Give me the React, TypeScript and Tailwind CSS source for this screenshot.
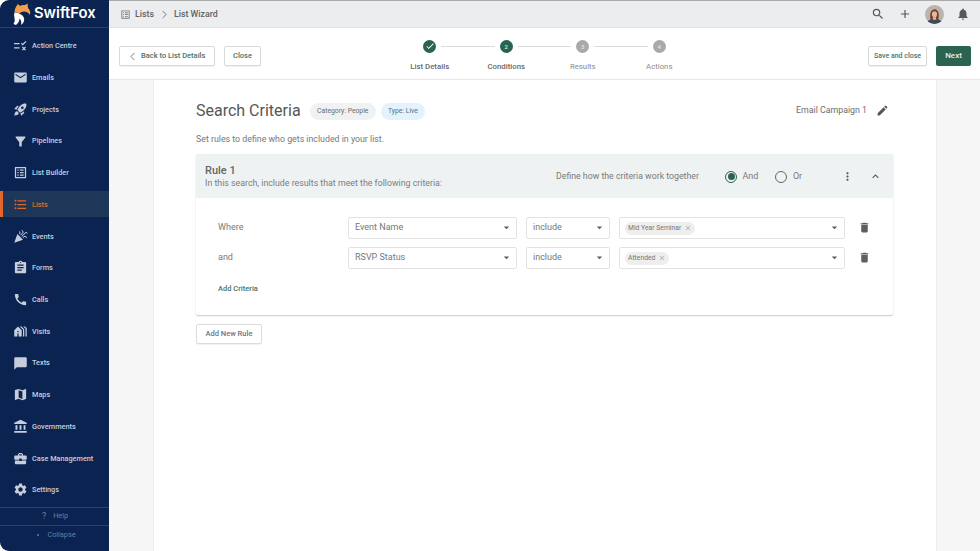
import type { ReactNode } from "react";
import { ChevronLeft, ChevronRight } from "lucide-react";
import {
  MdAccountBalance,
  MdAdd,
  MdArrowDropDown,
  MdAssignment,
  MdBusinessCenter,
  MdCall,
  MdCelebration,
  MdCheck,
  MdClose,
  MdDelete,
  MdEdit,
  MdEmail,
  MdExpandLess,
  MdFilterAlt,
  MdFormatListBulleted,
  MdHolidayVillage,
  MdListAlt,
  MdMap,
  MdMoreVert,
  MdNotifications,
  MdRocketLaunch,
  MdSearch,
  MdSettings,
  MdChatBubble,
} from "react-icons/md";

function ActionIcon() {
  return (
    <svg viewBox="0 0 16 12" className="h-[11px] w-[15px]" fill="none" stroke="currentColor" strokeWidth="1.4">
      <path d="M1 4h6M1 8.5h6" />
      <path d="M9 3.5l1.5 1.5L14 1.5" />
      <path d="M10 7.5l3.5 3.5M13.500 7.500L10 11" />
    </svg>
  );
}

function FoxLogo() {
  return (
    <svg viewBox="0 0 18 22" className="h-[22px] w-[18px]">
      <path d="M5 1L7 3Q9 1.500 12 2L14.500 .5L15 5Q18 8 17 12Q15 8.500 11 8.500Q8 8.500 6.500 10.500Q3.500 9 1.500 9.500Q1.500 5 5 1z" fill="#f0a04b" />
      <path d="M1.500 9.500Q5 9.500 8 11.500Q12 14 11 18Q10.500 20.500 8 22Q9 18 6.500 15.500Q6.500 19 3 22L.5 21Q2.500 18 1.500 15Q.5 12 1.500 9.500z" fill="#ffffff" />
    </svg>
  );
}

function Avatar() {
  return (
    <svg viewBox="0 0 20 20" className="h-[19px] w-[19px] rounded-full">
      <rect width="20" height="20" fill="#b9b4ae" />
      <path d="M2 20c.5-4 3.500-5.500 8-5.500s7.500 1.500 8 5.500z" fill="#3f4a55" />
      <path d="M5.800 15c-.8-4-.6-10 4.200-10.500 4.800.3 5 6.500 4 10.500-2.500 1-5.700 1-8.200 0z" fill="#7c3b2a" />
      <ellipse cx="10" cy="9.800" rx="2.700" ry="3.300" fill="#e2b8a0" />
      <path d="M8.300 13h3.400v2.500H8.300z" fill="#e2b8a0" />
    </svg>
  );
}

const navItems: { label: string; icon: ReactNode; active?: boolean }[] = [
  { label: "Action Centre", icon: <ActionIcon /> },
  { label: "Emails", icon: <MdEmail size={15} /> },
  { label: "Projects", icon: <MdRocketLaunch size={15} /> },
  { label: "Pipelines", icon: <MdFilterAlt size={15} /> },
  { label: "List Builder", icon: <MdListAlt size={15} /> },
  { label: "Lists", icon: <MdFormatListBulleted size={15} />, active: true },
  { label: "Events", icon: <MdCelebration size={15} /> },
  { label: "Forms", icon: <MdAssignment size={15} /> },
  { label: "Calls", icon: <MdCall size={15} /> },
  { label: "Visits", icon: <MdHolidayVillage size={15} /> },
  { label: "Texts", icon: <MdChatBubble size={15} /> },
  { label: "Maps", icon: <MdMap size={15} /> },
  { label: "Governments", icon: <MdAccountBalance size={15} /> },
  { label: "Case Management", icon: <MdBusinessCenter size={15} /> },
  { label: "Settings", icon: <MdSettings size={15} /> },
];

function Sidebar() {
  return (
    <aside className="flex h-full w-[109px] shrink-0 flex-col rounded-l-[9px] bg-[#0b2350] text-[#c6cedd]">
      <div className="flex h-[28px] items-center gap-[3px] border-b border-[#2d4268] pl-[13px]">
        <FoxLogo />
        <span className="font-['Inter',sans-serif] text-[14.800px] font-semibold leading-none text-white">SwiftFox</span>
      </div>
      <nav className="flex flex-col pt-[2px]">
        {navItems.map((item) => (
          <div key={item.label} className="flex h-[31.72px] items-center">
            <div
              className={
                item.active
                  ? "flex h-[26px] w-full items-center gap-[7px] border-l-[3px] border-[#e2672c] bg-[#1e3657] pl-[12px] text-[#e2672c]"
                  : "flex h-[26px] w-full items-center gap-[7px] pl-[15px]"
              }
            >
              <span className="flex w-[10px] justify-center">
                <span className="shrink-0">{item.icon}</span>
              </span>
              <span className="whitespace-nowrap text-[7.300px] font-medium leading-none">{item.label}</span>
            </div>
          </div>
        ))}
      </nav>
      <div className="mt-[1.500px] flex h-[19px] items-center justify-center gap-[7px] border-y border-[#2d4268] pl-[1px] text-[7.300px] text-[#6d7c9b]">
        <span className="text-[9px]">?</span>
        <span>Help</span>
      </div>
      <div className="flex h-[18px] items-center justify-center gap-[8px] pl-[4px] text-[7.300px] text-[#6d7c9b]">
        <span className="h-[2px] w-[2px] rounded-full bg-[#6d7c9b]" />
        <span>Collapse</span>
      </div>
    </aside>
  );
}

function TopBar() {
  return (
    <header className="flex h-[28px] items-center border-y border-t-[#aaaaaa] border-b-[#e0e1e2] bg-[#ecedee] pl-[11px] pr-[10px] text-[#5f6368]">
      <MdListAlt size={11} className="text-[#77797c]" />
      <span className="ml-[4px] pt-px text-[8.800px] font-medium">Lists</span>
      <ChevronRight size={13} strokeWidth={1.5} className="ml-[4px]" />
      <span className="ml-[3px] pt-px text-[8.800px] font-medium">List Wizard</span>
      <div className="ml-auto flex items-center text-[#55585c]">
        <MdSearch size={14} />
        <MdAdd size={14} className="ml-[13px]" />
        <span className="ml-[13px]">
          <Avatar />
        </span>
        <MdNotifications size={14} className="ml-[12px]" />
      </div>
    </header>
  );
}

function Stepper() {
  const steps = [
    { label: "List Details", state: "done" },
    { label: "Conditions", state: "current" },
    { label: "Results", state: "todo" },
    { label: "Actions", state: "todo" },
  ];
  return (
    <div className="w-[306px] pt-[11.500px]">
      <div className="flex items-center px-[31.750px]">
        {steps.map((s, i) => (
          <div key={s.label} className={i < 3 ? "flex flex-1 items-center" : "flex items-center"}>
            <span
              className={
                s.state === "todo"
                  ? "flex h-[13px] w-[13px] items-center justify-center rounded-full bg-[#a9a9a9] text-[6px] font-medium text-[#e4e4e4]"
                  : "flex h-[13px] w-[13px] items-center justify-center rounded-full bg-[#2a6450] text-[6px] font-medium text-[#dfe9e5]"
              }
            >
              {s.state === "done" ? <MdCheck size={10} className="text-white" /> : i + 1}
            </span>
            {i < 3 && <span className="mx-[5px] h-px flex-1 bg-[#dcdcdc]" />}
          </div>
        ))}
      </div>
      <div className="mt-[7.500px] grid grid-cols-4 text-center text-[7.800px] leading-[14px]">
        {steps.map((s) => (
          <span key={s.label} className={s.state === "todo" ? "font-normal text-[#8c8c8c]" : "font-medium text-[#6a6a6a]"}>
            {s.label}
          </span>
        ))}
      </div>
    </div>
  );
}

function WizardBar() {
  const btn = "flex h-[20px] items-center rounded-[2px] border border-[#d6dbd9] bg-white text-[7.500px] font-medium text-[#4b7466] shadow-[0_1px_1px_rgba(0,0,0,0.06)]";
  return (
    <div className="grid h-[52px] shrink-0 grid-cols-[1fr_auto_1fr] border-b border-[#e8e8e8] bg-white px-[9px]">
      <div className="flex items-center gap-[9px] pl-px pt-[5px]">
        <button type="button" className={`${btn} w-[96px] pl-[6px]`}>
          <ChevronLeft size={13} strokeWidth={1.6} className="text-[#55706a]" />
          <span className="ml-[2px]">Back to List Details</span>
        </button>
        <button type="button" className={`${btn} w-[37px] justify-center`}>
          Close
        </button>
      </div>
      <Stepper />
      <div className="flex items-center justify-end gap-[9px] pt-[5px]">
        <button type="button" className={`${btn} w-[59px] justify-center !text-[7px]`}>
          Save and close
        </button>
        <button type="button" className="flex h-[20px] w-[35px] items-center justify-center rounded-[2px] bg-[#2a6450] text-[8px] font-medium text-[#e6eeea]">
          Next
        </button>
      </div>
    </div>
  );
}

function Select({ className, children }: { className: string; children: ReactNode }) {
  return (
    <div className={`flex h-[22px] items-center rounded-[2px] border border-[#e2e2e2] bg-white pl-[6px] pr-[3px] text-[9px] text-[#777777] ${className}`}>
      <div className="min-w-0 flex-1 pt-px">{children}</div>
      <MdArrowDropDown size={13} className="text-[#5e5e5e]" />
    </div>
  );
}

function Tag({ label }: { label: string }) {
  return (
    <span className="inline-flex h-[13px] items-center gap-[3px] rounded-full bg-[#eeeeee] pl-[3px] pr-[3px] text-[6.800px] text-[#777777]">
      {label}
      <MdClose size={8} className="text-[#ababab]" />
    </span>
  );
}

function CriteriaRow({ label, field, tag }: { label: string; field: string; tag: string }) {
  return (
    <div className="flex items-center">
      <span className="w-[152px] pl-[22px] pt-px text-[9px] text-[#7a7a7a]">{label}</span>
      <Select className="w-[169px]">{field}</Select>
      <Select className="ml-[9px] w-[84px]">include</Select>
      <Select className="ml-[9px] w-[226px] !pl-[5px]">
        <Tag label={tag} />
      </Select>
      <MdDelete size={13} className="ml-[13px] text-[#5f5f5f]" />
    </div>
  );
}

function Radio({ label, on }: { label: string; on?: boolean }) {
  return (
    <span className="flex items-center gap-[5.500px] text-[9px] text-[#7a7a7a]">
      <span className={on ? "flex h-[12px] w-[12px] items-center justify-center rounded-full border border-[#2a6450]" : "h-[12px] w-[12px] rounded-full border border-[#666666]"}>
        {on && <span className="h-[7px] w-[7px] rounded-full bg-[#2a6450]" />}
      </span>
      {label}
    </span>
  );
}

function RuleCard() {
  return (
    <section className="mt-[8.500px] rounded-[2px] bg-white shadow-[0_1px_1.500px_rgba(0,0,0,0.22)]">
      <div className="flex h-[44px] items-center bg-[#eff2f3] pl-[9px] pr-[11px] pt-[2px]">
        <div className="w-[351px]">
          <div className="text-[11px] font-medium leading-[13px] text-[#666666]">Rule 1</div>
          <div className="text-[8.800px] leading-[12px] text-[#7d7d7d]">In this search, include results that meet the following criteria:</div>
        </div>
        <span className="w-[169px] whitespace-nowrap text-[8.750px] text-[#7a7a7a]">Define how the criteria work together</span>
        <Radio label="And" on />
        <span className="ml-[17px]">
          <Radio label="Or" />
        </span>
        <MdMoreVert size={13} className="ml-[39px] text-[#555555]" />
        <MdExpandLess size={13} className="ml-auto text-[#555555]" />
      </div>
      <div className="flex h-[117px] flex-col gap-[8px] pt-[19px]">
        <CriteriaRow label="Where" field="Event Name" tag="Mid Year Seminar" />
        <CriteriaRow label="and" field="RSVP Status" tag="Attended" />
        <button type="button" className="mt-[3px] w-fit pl-[22px] text-[7.500px] font-medium leading-[18px] text-[#4b7466]">
          Add Criteria
        </button>
      </div>
    </section>
  );
}

export default function App() {
  return (
    <div className="flex h-[551px] w-[980px] overflow-hidden bg-white font-['Roboto',sans-serif]">
      <Sidebar />
      <main className="flex min-w-0 flex-1 flex-col bg-[#f6f6f6]">
        <TopBar />
        <WizardBar />
        <div className="ml-[44px] mr-[43px] flex-1 border-x border-[#eeeeee] bg-white pl-[42px] pr-[43px] pt-[21px]">
          <div className="flex h-[20px] items-center">
            <h1 className="text-[16px] font-normal leading-none text-[#565656]">Search Criteria</h1>
            <span className="ml-[9px] flex h-[17px] items-center rounded-full bg-[#f0f1f3] px-[7.500px] text-[6.800px] text-[#6c6c6c]">Category: People</span>
            <span className="ml-[5px] flex h-[17px] items-center rounded-full bg-[#e3f3fd] px-[7px] text-[6.800px] text-[#5a6c80]">Type: Live</span>
            <span className="ml-auto text-[8.800px] text-[#6e6e6e]">Email Campaign 1</span>
            <MdEdit size={13} className="mb-px ml-[9px] mr-[4px] text-[#555555]" />
          </div>
          <p className="mt-[12px] text-[8.800px] leading-[13px] text-[#777777]">Set rules to define who gets included in your list.</p>
          <div className="-mt-px">
            <RuleCard />
          </div>
          <button type="button" className="mt-[9px] flex h-[20px] w-[66px] items-center justify-center rounded-[2px] border border-[#dcdcdc] bg-white text-[7.500px] font-medium text-[#67738f] shadow-[0_1px_1px_rgba(0,0,0,0.06)]">
            Add New Rule
          </button>
        </div>
      </main>
    </div>
  );
}
